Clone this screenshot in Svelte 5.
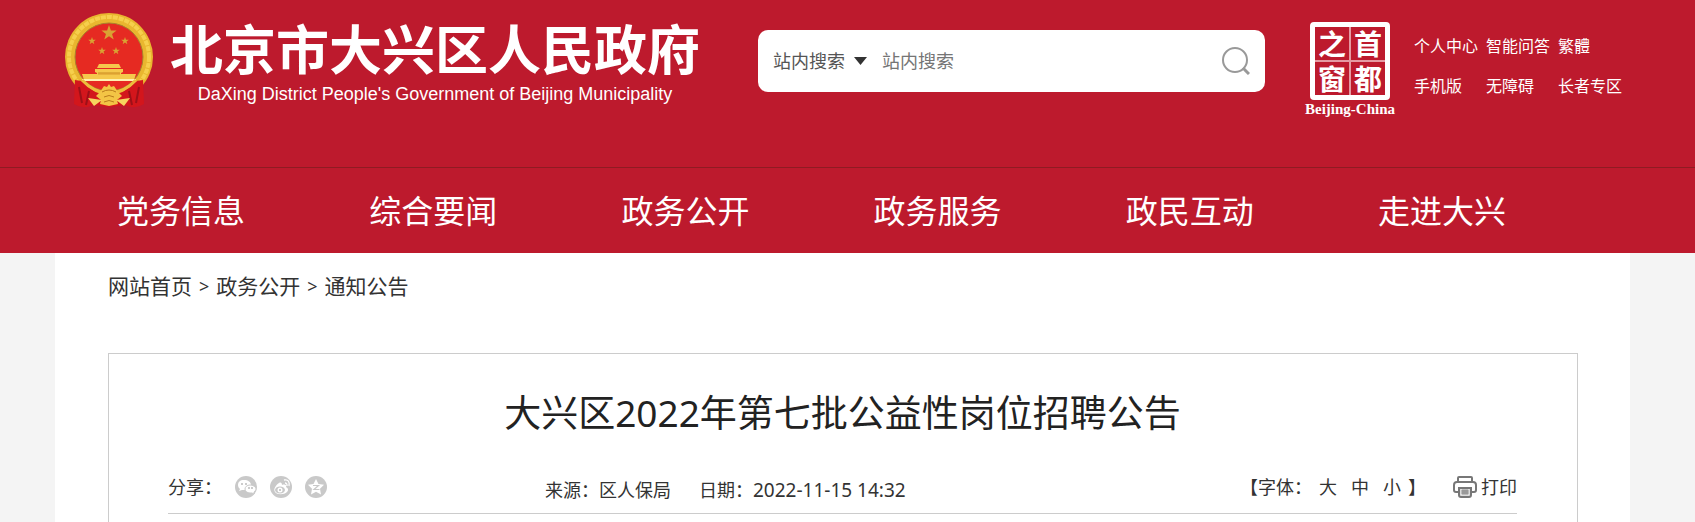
<script lang="ts">
  type Size = 'large' | 'medium' | 'small';

  const navItems = ['党务信息', '综合要闻', '政务公开', '政务服务', '政民互动', '走进大兴'];
  const quickLinks = ['个人中心', '智能问答', '繁體', '手机版', '无障碍', '长者专区'];
  const crumbs = ['网站首页', '政务公开', '通知公告'];
  const sealChars = ['之', '首', '窗', '都'];
  const sizes: { id: Size; label: string }[] = [
    { id: 'large', label: '大' },
    { id: 'medium', label: '中' },
    { id: 'small', label: '小' }
  ];

  let scope = $state('site');
  let keyword = $state('');
  let fontSize = $state<Size>('medium');

  function search(e: Event) {
    e.preventDefault();
    keyword = keyword.trim();
  }

  function printPage() {
    window.print();
  }
</script>

{#snippet star(x: number, y: number, r: number)}
  <path
    transform="translate({x} {y}) scale({r})"
    fill="#d9a233"
    d="M0-1 .24-.32.95-.31.38.12.59.81 0 .4-.59.81-.38.12-.95-.31-.24-.32Z"
  />
{/snippet}

<header class="site-header">
  <div class="top">
    <a class="brand" href="#home">
      <svg class="emblem" viewBox="0 0 90 96" aria-hidden="true">
        <circle cx="45" cy="45" r="44" fill="#e9b62f" />
        <circle cx="45" cy="45" r="40" fill="none" stroke="#f6cf4c" stroke-width="4" stroke-dasharray="5 1" />
        <circle cx="45" cy="45" r="34" fill="#e62a22" stroke="#a8812c" stroke-width="1" />
        {@render star(45, 21, 8)}
        {@render star(28, 29, 4)}
        {@render star(61, 29, 4)}
        {@render star(38, 39, 4)}
        {@render star(52, 39, 4)}
        <path d="M35 52h20l2 4H33Zm-4 5h28v3l-2 1v6H33v-6l-2-1Z" fill="#f5c84c" />
        <path d="M34 61h22" stroke="#c98a22" stroke-width="1" />
        <path d="M18 62h54l-2 6H20Z" fill="#f5c84c" />
        <path d="M34 62h22" stroke="#d9982c" stroke-width="1" />
        <path d="M18 68h54" stroke="#fff0b0" stroke-width="2" />
        <path d="M18 69q12 14 27 14t27-14l7-1 1 24q-9 6-19 1l-16 2-16-2q-10 5-19-1l1-24Z" fill="#d3161c" />
        <path d="M18 68q12 13 27 13t27-13" fill="none" stroke="#edbd3c" stroke-width="3" />
        <path d="m15 75 3 16m7-12-3 14m53-18-3 16m-7-12 3 14" fill="none" stroke="#9d1018" stroke-width="2" />
        <path d="m36 80 4-6 3 1 2-3 2 3 3-1 4 6 4 4-5 4 1 4-9 2-9-2 1-4-5-4Z" fill="#f3c445" />
        <path d="m24 86 14 2-8 6Zm42 0-14 2 8 6Z" fill="#f6d55f" />
        <path d="M38 80q7-4 14 0m-12 5q5-3 10 0m-10 5q5-3 10 0" fill="none" stroke="#b97b1c" stroke-width="1" />
      </svg>
      <span class="brand-text">
        <span class="brand-cn">北京市大兴区人民政府</span>
        <span class="brand-en">DaXing District People's Government of Beijing Municipality</span>
      </span>
    </a>

    <form class="search" onsubmit={search}>
      <div class="scope">
        <select bind:value={scope} aria-label="搜索范围">
          <option value="site">站内搜索</option>
        </select>
        <svg class="caret" viewBox="0 0 13 8" aria-hidden="true"><path d="M0 0h13L6.500 8Z" fill="#333" /></svg>
      </div>
      <input type="text" bind:value={keyword} placeholder="站内搜索" aria-label="站内搜索" />
      <button type="submit" aria-label="搜索">
        <svg viewBox="0 0 28 28" fill="none" stroke="#999" stroke-width="2" aria-hidden="true">
          <circle cx="13" cy="13" r="12" />
          <path d="m21 21 6 6" stroke-width="3" />
        </svg>
      </button>
    </form>

    <div class="portal">
      <a class="seal" href="#beijing">
        <span class="seal-grid">
          {#each sealChars as char}
            <span>{char}</span>
          {/each}
        </span>
        <span class="seal-name">Beijing-China</span>
      </a>
      <div class="quick">
        {#each quickLinks as link}
          <a href="#quick">{link}</a>
        {/each}
      </div>
    </div>
  </div>

  <nav class="nav">
    {#each navItems as item}
      <a href="#nav">{item}</a>
    {/each}
  </nav>
</header>

<main class="page">
  <div class="crumbs">
    {#each crumbs as crumb, i}
      {#if i > 0}<span class="sep">&gt;</span>{/if}
      <a href="#crumb">{crumb}</a>
    {/each}
  </div>

  <article class="article">
    <h1>大兴区2022年第七批公益性岗位招聘公告</h1>

    <div class="meta">
      <div class="share">
        <span>分享：</span>
        <button type="button" aria-label="微信">
          <svg viewBox="0 0 22 22">
            <circle cx="11" cy="11" r="11" fill="#c9c9c9" />
            <path d="M9 4c-4 0-6 2-6 5 0 2 1 3 2 4l-1 2 3-1h3c4 0 6-2 6-5s-3-5-7-5Z" fill="#fff" />
            <path d="M15 9c-3 0-5 2-5 4s2 4 5 4h2l2 1v-2c1-1 2-2 2-3 0-2-3-4-6-4Z" fill="#fff" stroke="#c9c9c9" />
            <circle cx="7" cy="8" r="1" fill="#bbb" /><circle cx="11" cy="8" r="1" fill="#bbb" />
            <circle cx="14" cy="12" r="1" fill="#bbb" /><circle cx="17" cy="12" r="1" fill="#bbb" />
          </svg>
        </button>
        <button type="button" aria-label="微博">
          <svg viewBox="0 0 22 22">
            <circle cx="11" cy="11" r="11" fill="#c9c9c9" />
            <path d="M9 7c2-1 3 0 3 2 3-1 5 0 4 2 2 1 3 3 1 5-3 3-10 3-12 0-2-3 1-7 4-9Z" fill="#fff" />
            <ellipse cx="10" cy="14" rx="5" ry="3.500" fill="#c9c9c9" />
            <circle cx="10" cy="14" r="2.500" fill="#fff" /><circle cx="10" cy="14" r="1" fill="#bbb" />
            <path d="M14 4c4-1 6 2 5 6m-4-3c2 0 2 1 2 3" fill="none" stroke="#fff" stroke-width="1.300" />
          </svg>
        </button>
        <button type="button" aria-label="QQ空间">
          <svg viewBox="0 0 22 22">
            <circle cx="11" cy="11" r="11" fill="#c9c9c9" />
            <path d="m11 3 2.500 5 5.500.8-4 4 1 5.700-5-2.700-5 2.700 1-5.700-4-4L8.500 8Z" fill="#fff" />
            <path d="M8 9.500h5.500l-4.500 4h5.500" fill="none" stroke="#c9c9c9" stroke-width="1.200" />
          </svg>
        </button>
      </div>

      <div class="source">
        <span>来源：区人保局</span>
        <span>日期：<time datetime="2022-11-15T14:32">2022-11-15 14:32</time></span>
      </div>

      <div class="tools">
        <div class="sizes">
          <span>【字体：</span>
          <div class="size-options">
            {#each sizes as size}
              <button type="button" aria-pressed={fontSize === size.id} onclick={() => (fontSize = size.id)}>{size.label}</button>
            {/each}
          </div>
          <span>】</span>
        </div>
        <button class="print" type="button" onclick={printPage}>
          <svg viewBox="0 0 24 22" fill="none" stroke="#777" stroke-width="2" aria-hidden="true">
            <path d="M5 6V2q0-1 1-1h12q1 0 1 1v4" fill="#fff" />
            <path d="M5 16H3q-2 0-2-2V9q0-3 3-3h16q3 0 3 3v5q0 2-2 2h-2" />
            <path d="M6 12h12v7q0 2-2 2H8q-2 0-2-2Z" fill="#ddd" />
            <path d="M9 14h6v4H9Z" fill="#999" stroke="#999" stroke-width="1" />
          </svg>
          打印
        </button>
      </div>
    </div>
  </article>
</main>

<style>
  :global(body) {
    margin: 0;
    background: #f4f4f4;
    color: #333;
    font-family: 'Noto Sans', 'Noto Sans CJK SC', sans-serif;
    font-size: 18px;
  }

  a {
    color: inherit;
    text-decoration: none;
  }

  button,
  input,
  select {
    padding: 0;
    border: 0;
    background: none;
    color: inherit;
    font: inherit;
  }

  button {
    cursor: pointer;
  }

  svg {
    display: block;
    flex: none;
  }

  .site-header {
    background: #bd1a2d;
    color: #fff;
  }

  .top {
    display: flex;
    align-items: flex-start;
    min-height: 155px;
    padding: 12px 65px 0 64px;
  }

  .brand {
    display: flex;
    gap: 16px;
    flex: none;
  }

  .emblem {
    width: 90px;
    height: 96px;
  }

  .brand-text {
    display: flex;
    flex-direction: column;
    align-items: center;
    padding-top: 7px;
    white-space: nowrap;
  }

  .brand-cn {
    font-size: 53px;
    font-weight: 700;
    line-height: 62px;
  }

  .brand-en {
    font-family: 'Liberation Sans', sans-serif;
    font-size: 18px;
    line-height: 26px;
  }

  .search {
    display: flex;
    flex: 0 1 507px;
    align-items: center;
    box-sizing: border-box;
    height: 62px;
    margin: 18px 40px 0 58px;
    padding: 0 15px;
    border-radius: 10px;
    background: #fff;
    color: #555;
  }

  .scope {
    display: flex;
    align-items: center;
    gap: 9px;
    margin-right: 15px;
  }

  .scope select {
    appearance: none;
    cursor: pointer;
  }

  .caret {
    width: 13px;
    height: 8px;
  }

  .search input {
    flex: 1;
    min-width: 0;
    outline: none;
  }

  .search input::placeholder {
    color: #757575;
    opacity: 1;
  }

  .search button svg {
    width: 28px;
    height: 28px;
  }

  .portal {
    display: flex;
    flex: none;
    gap: 19px;
    padding-top: 10px;
  }

  .seal {
    display: flex;
    flex-direction: column;
    align-items: center;
  }

  .seal-grid {
    display: grid;
    grid-template-columns: 1fr 1fr;
    gap: 2px;
    width: 70px;
    border: 5px solid #fff;
    border-radius: 4px;
    background: linear-gradient(#e59aa2, #e59aa2) center / 2px 100% no-repeat,
      linear-gradient(#e59aa2, #e59aa2) center / 100% 2px no-repeat;
  }

  .seal-grid span {
    font-family: 'Noto Sans CJK SC', sans-serif;
    font-size: 28px;
    font-weight: 700;
    line-height: 33px;
    text-align: center;
  }

  .seal-name {
    font-family: 'Liberation Serif', serif;
    font-size: 15px;
    font-weight: 700;
    line-height: 18px;
  }

  .quick {
    display: grid;
    grid-template-columns: 64px 64px 64px;
    align-content: start;
    gap: 16px 8px;
    padding-top: 12px;
    font-size: 16px;
    line-height: 24px;
    white-space: nowrap;
  }

  .nav {
    display: flex;
    padding: 1px 127px 0 55px;
    border-top: 1px solid #8f1b22;
  }

  .nav a {
    flex: 1;
    font-size: 32px;
    line-height: 84px;
    text-align: center;
    white-space: nowrap;
  }

  .page {
    margin: 0 65px 0 55px;
    padding: 15px 52px 0 53px;
    background: #fff;
  }

  .crumbs {
    display: flex;
    gap: 7px;
    font-size: 21px;
    line-height: 36px;
  }

  .sep {
    font-size: 18px;
  }

  .article {
    margin-top: 49px;
    padding: 31px 60px 24px 59px;
    border: 1px solid #ccc;
  }

  h1 {
    margin: 0;
    color: #222;
    font-size: 37px;
    font-weight: 400;
    line-height: 56px;
    text-align: center;
  }

  .meta {
    display: flex;
    margin-top: 27px;
    padding-bottom: 7px;
    border-bottom: 1px solid #ccc;
    line-height: 32px;
    white-space: nowrap;
  }

  .share,
  .source,
  .tools,
  .sizes,
  .size-options,
  .print {
    display: flex;
    align-items: center;
  }

  .share {
    gap: 13px;
  }

  .share svg {
    width: 22px;
    height: 22px;
  }

  .source {
    gap: 28px;
    margin: 0 auto 0 218px;
    padding-top: 6px;
  }

  time {
    font-size: 19px;
  }

  .tools {
    gap: 27px;
  }

  .sizes {
    gap: 7px;
  }

  .size-options {
    gap: 14px;
  }

  .print {
    gap: 4px;
  }

  .print svg {
    width: 24px;
    height: 22px;
  }
</style>
